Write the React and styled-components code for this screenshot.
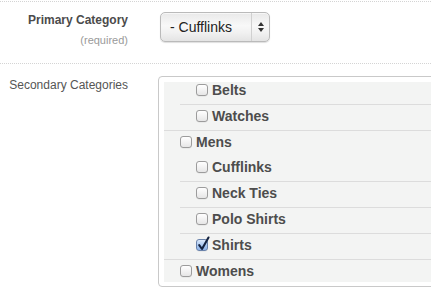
import React, { useLayoutEffect, useRef } from "react";
import styled, { createGlobalStyle } from "styled-components";

const Global = createGlobalStyle`
  html, body { margin: 0; padding: 0; background: #fff; overflow: hidden; }
  body { font-family: "Liberation Sans", Arial, Helvetica, sans-serif; }
  * { box-sizing: border-box; }
`;

const Page = styled.div`
  padding-top: 1px;
  width: 431px;
  height: 294px;
  overflow: hidden;
`;

const FieldRow = styled.div`
  display: grid;
  grid-template-columns: 128px 1fr;
  column-gap: 30px;
  align-items: start;
  border-top: ${(p) => (p.$first ? "1px dotted #d4d4d4" : "none")};
  border-bottom: ${(p) => (p.$last ? "none" : "1px dotted #d4d4d4")};
  padding: ${(p) => p.$pad};
`;

const LabelCol = styled.div`
  text-align: right;
  padding-top: ${(p) => p.$top || 0}px;
  white-space: nowrap;
`;

const LabelText = styled.div`
  font-size: 12px;
  line-height: 16px;
  font-weight: ${(p) => (p.$bold ? 700 : 400)};
  color: ${(p) => (p.$bold ? "#4b4b4b" : "#555")};
`;

const Hint = styled.div`
  margin-top: 4px;
  font-size: 11px;
  line-height: 16px;
  color: #9a9a9a;
`;

const SelectBox = styled.div`
  display: flex;
  width: 110px;
  height: 30px;
  margin-left: 2px;
  border: 1px solid #bababa;
  border-radius: 5px;
  background: linear-gradient(#e9e9e9, #f8f8f8 45%, #f1f1f1 70%, #e4e4e4);
  box-shadow: 0 1px 1px rgba(0, 0, 0, 0.13), inset 0 1px 0 rgba(255, 255, 255, 0.6);
  font-size: 14px;
  color: #222;
`;

const SelectValue = styled.div`
  width: 91px;
  display: flex;
  align-items: center;
  padding-left: 9px;
  border-right: 1px solid #d0d0d0;
  white-space: nowrap;
`;

const SelectArrows = styled.div`
  flex: 1;
  display: flex;
  flex-direction: column;
  align-items: center;
  justify-content: center;
  gap: 2px;
  svg { display: block; }
`;

const Frame = styled.div`
  width: 300px;
  border: 1px solid #c9c9c9;
  border-radius: 4px;
  padding: 5px 5px 4px 5px;
  background: #fff;
`;

const Scroller = styled.div`
  height: 200px;
  overflow-y: auto;
  background: #f3f4f3;
`;

const List = styled.ul`
  list-style: none;
  margin: 0;
  padding: 0;
`;

const TopItem = styled.li`
  padding-left: 16px;
  border-top: 1px solid #dcdcdc;
  &:first-child { border-top: none; }
`;

const ChildItem = styled.li`
  padding-left: 16px;
  border-top: 1px solid #dcdcdc;
  &:first-child { border-top: none; }
`;

const Row = styled.label`
  display: flex;
  align-items: center;
  height: 25px;
  padding-bottom: 4px;
  font-size: 14px;
  font-weight: 700;
  color: #4d4d4d;
  white-space: nowrap;
`;

const Box = styled.span`
  position: relative;
  flex-shrink: 0;
  width: 12px;
  height: 12px;
  margin-right: 4px;
  border: 1px solid ${(p) => (p.$checked ? "#6a83ab" : "#9c9c9c")};
  border-radius: 3px;
  background: ${(p) =>
    p.$checked
      ? "linear-gradient(#dbe9fb, #a8c7f0 55%, #8fb5ea)"
      : "linear-gradient(#ffffff, #e6e6e6)"};
  box-shadow: 0 0.5px 0 rgba(0, 0, 0, 0.08);
  svg {
    position: absolute;
    left: 0px;
    top: -4px;
  }
`;

const HiddenInput = styled.input`
  position: absolute;
  opacity: 0;
  width: 0;
  height: 0;
  margin: 0;
`;

const Check = ({ checked }) => (
  <>
    <HiddenInput type="checkbox" defaultChecked={checked} />
    <Box $checked={checked}>
      {checked && (
        <svg width="13" height="15" viewBox="0 0 13 15">
          <path
            d="M2.2 9.2 L5 13 L11.5 1.5"
            fill="none"
            stroke="#142340"
            strokeWidth="2.1"
            strokeLinecap="round"
            strokeLinejoin="round"
          />
        </svg>
      )}
    </Box>
  </>
);

const tree = [
  { name: "Accessories", children: ["Bags", "Belts", "Watches"] },
  { name: "Mens", children: ["Cufflinks", "Neck Ties", "Polo Shirts", "Shirts"] },
  { name: "Womens", children: ["Dresses", "Shoes"] },
];

const checkedSet = new Set(["Mens/Shirts"]);

export default function App() {
  const scroller = useRef(null);
  useLayoutEffect(() => {
    if (scroller.current) scroller.current.scrollTop = 54;
  }, []);

  return (
    <Page>
      <Global />
      <FieldRow $first $pad="10px 0 15px">
        <LabelCol>
          <LabelText $bold>Primary Category</LabelText>
          <Hint>(required)</Hint>
        </LabelCol>
        <div>
          <SelectBox>
            <SelectValue>- Cufflinks</SelectValue>
            <SelectArrows>
              <svg width="6" height="4" viewBox="0 0 6 4">
                <path d="M3 0 L6 4 L0 4 Z" fill="#333" />
              </svg>
              <svg width="6" height="4" viewBox="0 0 6 4">
                <path d="M0 0 L6 0 L3 4 Z" fill="#333" />
              </svg>
            </SelectArrows>
          </SelectBox>
        </div>
      </FieldRow>
      <FieldRow $last $pad="12px 0 0">
        <LabelCol $top={1}>
          <LabelText>Secondary Categories</LabelText>
        </LabelCol>
        <Frame>
          <Scroller ref={scroller}>
            <List>
              {tree.map((top) => (
                <TopItem key={top.name}>
                  <Row>
                    <Check checked={false} />
                    {top.name}
                  </Row>
                  <List>
                    {top.children.map((c) => (
                      <ChildItem key={c}>
                        <Row>
                          <Check checked={checkedSet.has(top.name + "/" + c)} />
                          {c}
                        </Row>
                      </ChildItem>
                    ))}
                  </List>
                </TopItem>
              ))}
            </List>
          </Scroller>
        </Frame>
      </FieldRow>
    </Page>
  );
}
